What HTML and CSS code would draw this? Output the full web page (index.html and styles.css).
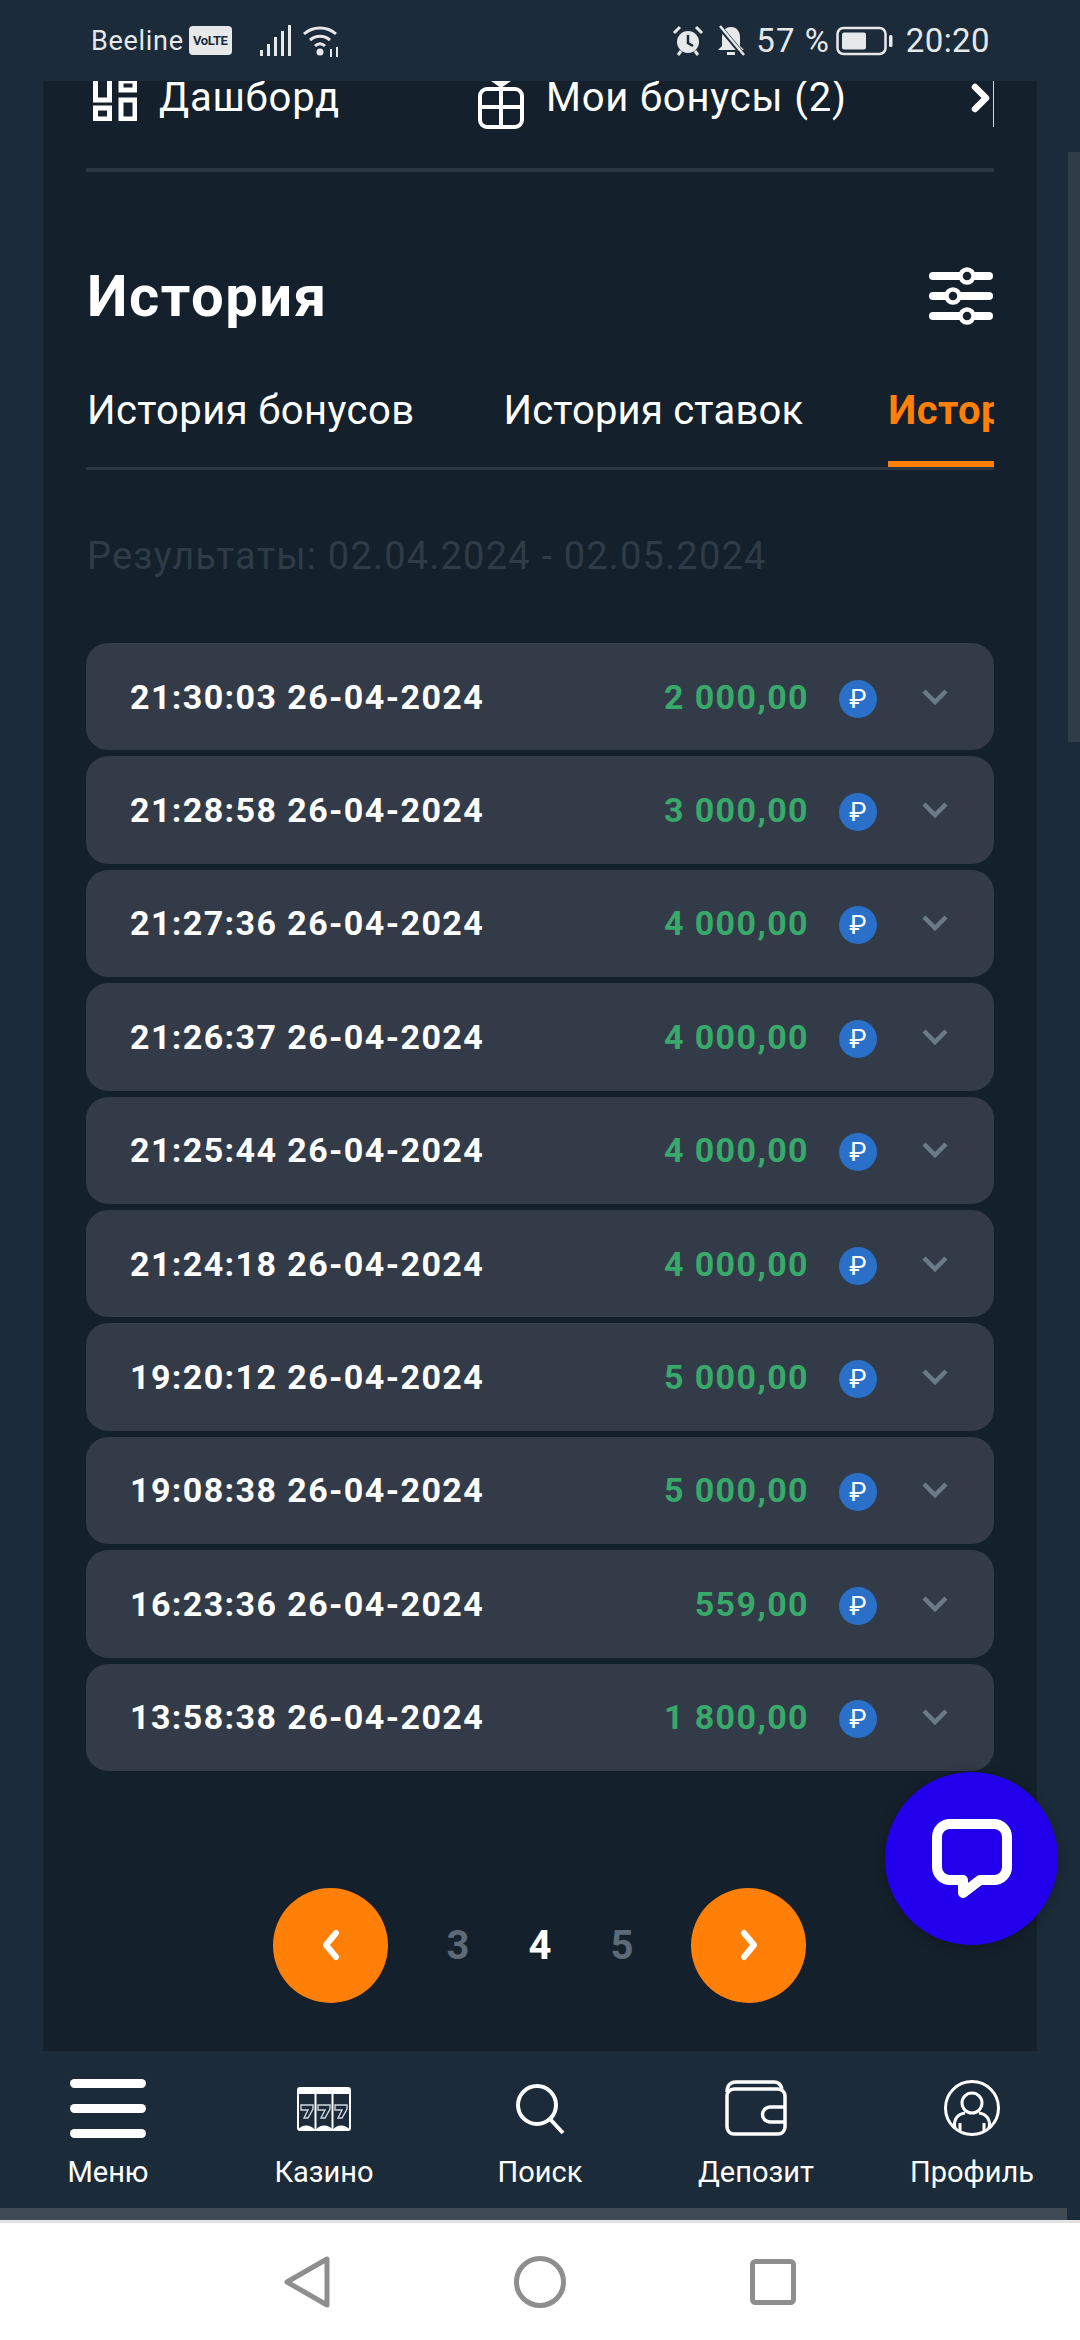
FILE: index.html
```html
<!DOCTYPE html>
<html lang="ru">
<head>
    <meta charset="UTF-8">
    <meta name="viewport" content="width=device-width, initial-scale=1.0">
    <title>История</title>
    <link rel="stylesheet" href="styles.css">
</head>
<body>
    <div class="status-bar">
        <div class="status-left">
            <span class="carrier">Beeline</span>
            <span class="volte">VoLTE</span>
            <svg class="signal" viewBox="0 0 32 32" width="32" height="32"><g fill="#e6e8ea"><rect x="0" y="25" width="3" height="6"/><rect x="7" y="19" width="3" height="12"/><rect x="14" y="12" width="3" height="19"/><rect x="21" y="6" width="3" height="25"/><rect x="28" y="0" width="3" height="31"/></g></svg>
            <svg class="wifi" viewBox="0 0 38 32" width="38" height="32"><g fill="none" stroke="#e6e8ea" stroke-width="3"><path d="M2 9C11 1 25 1 34 9"/><path d="M8 15C14 10 22 10 28 15"/><path d="M13 21C16 18 20 18 23 21"/></g><circle cx="18" cy="27" r="3.5" fill="#e6e8ea"/><path d="M29 24v8M35 22v10" stroke="#e6e8ea" stroke-width="2"/></svg>
        </div>
        <div class="status-right">
            <svg class="alarm" viewBox="0 0 32 32" width="32" height="32"><circle cx="16" cy="17" r="11" fill="#e6e8ea"/><path d="M16 10v8l5 3" fill="none" stroke="#1c2b39" stroke-width="2.5"/><path d="M2 8l6-6M30 8l-6-6M6 30l3-4M26 30l-3-4" stroke="#e6e8ea" stroke-width="3"/></svg>
            <svg class="bell" viewBox="0 0 32 32" width="32" height="32"><path d="M16 2c6 0 9 5 9 10v9l4 4H3l4-4v-9c0-5 3-10 9-10z" fill="#e6e8ea"/><rect x="12" y="27" width="8" height="3" fill="#e6e8ea"/><path d="M4 1l25 30" stroke="#1c2b39" stroke-width="5"/><path d="M5 1l24 29" stroke="#e6e8ea" stroke-width="2.5"/></svg>
            <span class="percent">57 %</span>
            <svg class="battery" viewBox="0 0 58 32" width="58" height="32"><rect x="1.5" y="3" width="48" height="26" rx="6" fill="none" stroke="#e6e8ea" stroke-width="2.5"/><rect x="6" y="7.5" width="24" height="17" rx="2" fill="#e6e8ea"/><rect x="53" y="10" width="3.5" height="12" rx="1.5" fill="#e6e8ea"/></svg>
            <span class="clock">20:20</span>
        </div>
    </div>

    <div class="panel">
        <div class="sub-nav">
            <div class="sub-nav-item dash">
                <svg viewBox="0 0 44 40" width="44" height="40"><g fill="none" stroke="#fff" stroke-width="5"><rect x="2.5" y="-5" width="14" height="24"/><rect x="28" y="0" width="14" height="9"/><rect x="2.5" y="27" width="14" height="11"/><rect x="28" y="19" width="14" height="19"/></g></svg>
                <span>Дашборд</span>
            </div>
            <div class="sub-nav-item gift">
                <svg viewBox="0 0 46 48" width="46" height="48"><g fill="none" stroke="#fff" stroke-width="4"><rect x="2" y="8" width="42" height="38" rx="7"/><path d="M23 8v38M2 26h42"/></g><path d="M13 0l10 7 10-7z" fill="#fff"/></svg>
                <span>Мои бонусы (2)</span>
            </div>
            <div class="sub-nav-end">
                <svg viewBox="0 0 20 30" width="20" height="30"><path d="M4 4l11 11L4 26" fill="none" stroke="#fff" stroke-width="6.500" stroke-linecap="round" stroke-linejoin="round"/></svg>
            </div>
        </div>

        <div class="history-head">
            <h1 class="history-title">История</h1>
            <svg class="filter-icon" viewBox="0 0 64 62" width="64" height="62"><g fill="#fff"><rect x="0" y="7" width="64" height="8" rx="4"/><rect x="0" y="27" width="64" height="8" rx="4"/><rect x="0" y="47" width="64" height="8" rx="4"/></g><g fill="#14202b" stroke="#fff" stroke-width="4.500"><circle cx="38" cy="11" r="6.500"/><circle cx="24" cy="31" r="6.500"/><circle cx="38" cy="51" r="6.500"/></g></svg>
        </div>

        <div class="tabs">
            <span class="tab">История бонусов</span>
            <span class="tab">История ставок</span>
            <span class="tab active">История транзакций</span>
        </div>

        <div class="results">Результаты: 02.04.2024 - 02.05.2024</div>

        <div class="rows">
            <div class="row"><span class="row-date">21:30:03 26-04-2024</span><span class="row-sum">2 000,00</span><span class="rub">₽</span><svg class="chev" viewBox="0 0 28 18" width="28" height="18"><path d="M3 3l11 11L25 3" fill="none" stroke="#6a7a88" stroke-width="4.5"/></svg></div>
            <div class="row"><span class="row-date">21:28:58 26-04-2024</span><span class="row-sum">3 000,00</span><span class="rub">₽</span><svg class="chev" viewBox="0 0 28 18" width="28" height="18"><path d="M3 3l11 11L25 3" fill="none" stroke="#6a7a88" stroke-width="4.5"/></svg></div>
            <div class="row"><span class="row-date">21:27:36 26-04-2024</span><span class="row-sum">4 000,00</span><span class="rub">₽</span><svg class="chev" viewBox="0 0 28 18" width="28" height="18"><path d="M3 3l11 11L25 3" fill="none" stroke="#6a7a88" stroke-width="4.5"/></svg></div>
            <div class="row"><span class="row-date">21:26:37 26-04-2024</span><span class="row-sum">4 000,00</span><span class="rub">₽</span><svg class="chev" viewBox="0 0 28 18" width="28" height="18"><path d="M3 3l11 11L25 3" fill="none" stroke="#6a7a88" stroke-width="4.5"/></svg></div>
            <div class="row"><span class="row-date">21:25:44 26-04-2024</span><span class="row-sum">4 000,00</span><span class="rub">₽</span><svg class="chev" viewBox="0 0 28 18" width="28" height="18"><path d="M3 3l11 11L25 3" fill="none" stroke="#6a7a88" stroke-width="4.5"/></svg></div>
            <div class="row"><span class="row-date">21:24:18 26-04-2024</span><span class="row-sum">4 000,00</span><span class="rub">₽</span><svg class="chev" viewBox="0 0 28 18" width="28" height="18"><path d="M3 3l11 11L25 3" fill="none" stroke="#6a7a88" stroke-width="4.5"/></svg></div>
            <div class="row"><span class="row-date">19:20:12 26-04-2024</span><span class="row-sum">5 000,00</span><span class="rub">₽</span><svg class="chev" viewBox="0 0 28 18" width="28" height="18"><path d="M3 3l11 11L25 3" fill="none" stroke="#6a7a88" stroke-width="4.5"/></svg></div>
            <div class="row"><span class="row-date">19:08:38 26-04-2024</span><span class="row-sum">5 000,00</span><span class="rub">₽</span><svg class="chev" viewBox="0 0 28 18" width="28" height="18"><path d="M3 3l11 11L25 3" fill="none" stroke="#6a7a88" stroke-width="4.5"/></svg></div>
            <div class="row"><span class="row-date">16:23:36 26-04-2024</span><span class="row-sum">559,00</span><span class="rub">₽</span><svg class="chev" viewBox="0 0 28 18" width="28" height="18"><path d="M3 3l11 11L25 3" fill="none" stroke="#6a7a88" stroke-width="4.5"/></svg></div>
            <div class="row"><span class="row-date">13:58:38 26-04-2024</span><span class="row-sum">1 800,00</span><span class="rub">₽</span><svg class="chev" viewBox="0 0 28 18" width="28" height="18"><path d="M3 3l11 11L25 3" fill="none" stroke="#6a7a88" stroke-width="4.5"/></svg></div>
        </div>

        <div class="pager">
            <span class="pager-btn"><svg viewBox="0 0 24 34" width="24" height="34"><path d="M17 5L7 17l10 12" fill="none" stroke="#fff" stroke-width="6" stroke-linecap="round" stroke-linejoin="round"/></svg></span>
            <span class="pager-num">3</span>
            <span class="pager-num current">4</span>
            <span class="pager-num">5</span>
            <span class="pager-btn"><svg viewBox="0 0 24 34" width="24" height="34"><path d="M7 5l10 12L7 29" fill="none" stroke="#fff" stroke-width="6" stroke-linecap="round" stroke-linejoin="round"/></svg></span>
        </div>
    </div>

    <div class="scroll-thumb"></div>

    <div class="chat-btn">
        <svg viewBox="0 0 80 80" width="80" height="80"><path d="M18 5h44a13 13 0 0 1 13 13v30a13 13 0 0 1-13 13H48L31 74V61H18A13 13 0 0 1 5 48V18A13 13 0 0 1 18 5z" fill="none" stroke="#fff" stroke-width="10" stroke-linejoin="round"/></svg>
    </div>

    <nav class="bottom-nav">
        <div class="nav-item">
            <svg viewBox="0 0 76 60" width="76" height="60"><g fill="#fff"><rect x="0" y="0" width="76" height="9" rx="4.5"/><rect x="0" y="25" width="76" height="9" rx="4.5"/><rect x="0" y="50" width="76" height="9" rx="4.5"/></g></svg>
            <span>Меню</span>
        </div>
        <div class="nav-item">
            <svg viewBox="0 0 54 60" width="54" height="60"><g transform="translate(0 8)"><rect x="1" y="1" width="52" height="42" rx="2" fill="none" stroke="#fff" stroke-width="2"/><rect x="1" y="1" width="52" height="6" fill="#fff"/><path d="M18.500 1v42M35.500 1v42" stroke="#fff" stroke-width="2"/><path d="M1 43c3-6 13-6 17 0M19 43c3-6 13-6 17 0M36 43c3-6 13-6 17 0" fill="#fff"/><g fill="none" stroke="#cfd6dc" stroke-width="1.400"><path d="M4 18h12v4l-5 9H7l4-8H4zM21 18h12v4l-5 9h-4l4-8h-7zM38 18h12v4l-5 9h-4l4-8h-7z"/></g></g></svg>
            <span>Казино</span>
        </div>
        <div class="nav-item">
            <svg viewBox="0 0 50 60" width="50" height="60"><g transform="translate(0 5)"><circle cx="22" cy="21" r="19" fill="none" stroke="#fff" stroke-width="4"/><path d="M35 35l13 14" stroke="#fff" stroke-width="4"/></g></svg>
            <span>Поиск</span>
        </div>
        <div class="nav-item">
            <svg viewBox="0 0 62 60" width="62" height="60"><g transform="translate(0 1)" fill="none" stroke="#fff" stroke-width="3.500"><path d="M2 12c0-6 3-10 9-10h38c5 0 7 3 8 7"/><rect x="2" y="9" width="58" height="45" rx="7"/><path d="M60 27H45a7.500 7.500 0 0 0 0 15h15"/></g></svg>
            <span>Депозит</span>
        </div>
        <div class="nav-item">
            <svg viewBox="0 0 56 60" width="56" height="60"><g fill="none" stroke="#fff" stroke-width="3"><circle cx="28" cy="29" r="26.500"/><circle cx="28" cy="24" r="10"/><path d="M11 49c-2-9 3-14 10-15M45 49c2-9-3-14-10-15M16 44v8M40 44v8"/></g></svg>
            <span>Профиль</span>
        </div>
    </nav>
    <div class="nav-strip"></div>

    <div class="sys-nav">
        <svg viewBox="0 0 46 52" width="46" height="52"><path d="M3 26L43 3v46z" fill="none" stroke="#8e8e8e" stroke-width="5" stroke-linejoin="round"/></svg>
        <svg viewBox="0 0 52 52" width="52" height="52"><circle cx="26" cy="26" r="23.500" fill="none" stroke="#8e8e8e" stroke-width="5"/></svg>
        <svg viewBox="0 0 46 46" width="46" height="46"><rect x="2.500" y="2.500" width="41" height="41" rx="3" fill="none" stroke="#8e8e8e" stroke-width="5"/></svg>
    </div>
</body>
</html>
```

FILE: styles.css
```css
* {
    margin: 0;
    padding: 0;
    box-sizing: border-box;
}

body {
    font-family: 'Roboto', 'Noto Sans', sans-serif;
    background: #1c2b39;
    color: white;
    width: 1080px;
    height: 2340px;
    display: flex;
    flex-direction: column;
    position: relative;
    overflow: hidden;
}

svg {
    display: block;
    flex-shrink: 0;
}

/* status bar */
.status-bar {
    height: 81px;
    padding: 0 90px 0 91px;
    display: flex;
    align-items: center;
    justify-content: space-between;
    color: #e6e8ea;
    font-size: 33px;
}

.status-left, .status-right {
    display: flex;
    align-items: center;
}

.carrier {
    font-size: 27px;
    letter-spacing: 0.7px;
}

.volte {
    background: #e6e8ea;
    color: #1c2b39;
    width: 43px;
    height: 29px;
    display: flex;
    align-items: center;
    justify-content: center;
    font-size: 13px;
    font-weight: bold;
    letter-spacing: -0.4px;
    border-radius: 4px;
    margin-left: 5px;
    margin-right: 28px;
}

.wifi {
    margin-left: 10px;
}

.bell {
    margin-left: 11px;
}

.percent {
    margin-left: 9px;
    margin-right: 6px;
    letter-spacing: 1px;
}

.clock {
    margin-left: 12px;
    letter-spacing: 0.4px;
}

/* main panel */
.panel {
    height: 1970px;
    margin: 0 43px;
    background: #14202b;
    padding: 0 43px;
    overflow: hidden;
}

.sub-nav {
    height: 91px;
    border-bottom: 4px solid #2a3641;
    display: flex;
    align-items: flex-start;
    position: relative;
}

.sub-nav-item {
    display: flex;
    font-size: 40px;
    line-height: 34px;
    letter-spacing: 0.8px;
    gap: 22px;
}

.dash {
    width: 385px;
    margin-left: 7px;
}

.sub-nav-end {
    position: absolute;
    right: 0;
    top: 0;
    height: 46px;
    padding: 2px 2px 0 0;
    border-right: 1px solid #cfd6dc;
}

.history-head {
    display: flex;
    justify-content: space-between;
    align-items: center;
    margin-top: 93px;
    height: 62px;
}

.history-title {
    font-size: 58px;
    font-weight: bold;
    line-height: 62px;
    letter-spacing: 1.5px;
    margin-left: 1px;
}

.filter-icon {
    margin-right: 1px;
}

.tabs {
    height: 90px;
    margin-top: 53px;
    padding-top: 8px;
    border-bottom: 3px solid #2a3641;
    display: flex;
    gap: 88px;
    white-space: nowrap;
    overflow: hidden;
    font-size: 40px;
    line-height: 46px;
    letter-spacing: 0.4px;
}

.tab {
    padding-left: 1px;
    position: relative;
    height: 82px;
}

.tab:nth-child(2) {
    letter-spacing: 0.2px;
}

.tab.active {
    color: #ff7f07;
    font-weight: bold;
    padding-left: 0;
    margin-left: -3px;
    border-bottom: 9px solid #ff7f07;
    border-top-left-radius: 8px;
}

.results {
    color: #2f3b47;
    font-size: 38px;
    line-height: 44px;
    letter-spacing: 1.2px;
    margin-top: 64px;
    padding-left: 1px;
}

.rows {
    margin-top: 65px;
    display: flex;
    flex-direction: column;
    gap: 6px;
}

.row {
    height: 107.4px;
    background: #323b47;
    border-radius: 22px;
    display: flex;
    align-items: center;
    padding: 0 45px 0 44px;
    font-size: 34px;
    font-weight: bold;
    letter-spacing: 1.4px;
}

.row-date {
    flex: 1;
}

.row-sum {
    color: #38a96b;
}

.rub {
    width: 38px;
    height: 38px;
    border-radius: 50%;
    background: #2a70c8;
    font-size: 26px;
    font-weight: normal;
    letter-spacing: 0;
    display: flex;
    align-items: center;
    justify-content: center;
    margin-left: 30px;
    margin-top: 4px;
}

.chev {
    margin-left: 44px;
    margin-top: 0;
}

.pager {
    display: flex;
    align-items: center;
    margin-top: 117px;
    padding-left: 187px;
    font-size: 40px;
    font-weight: bold;
}

.pager-btn {
    width: 115px;
    height: 115px;
    border-radius: 50%;
    background: #ff7f07;
    display: flex;
    align-items: center;
    justify-content: center;
}

.pager-num {
    width: 82px;
    text-align: center;
    color: #5d6b78;
}

.pager-num:nth-child(2) {
    margin-left: 29px;
}

.pager-num:nth-child(4) {
    margin-right: 28px;
}

.pager-num.current {
    color: white;
}

/* things over the page */
.scroll-thumb {
    position: absolute;
    right: 0;
    top: 152px;
    width: 12px;
    height: 590px;
    background: #2f3d49;
}

.chat-btn {
    position: absolute;
    left: 885px;
    top: 1772px;
    width: 173px;
    height: 173px;
    border-radius: 50%;
    background: #2200ee;
    box-shadow: 0 2px 12px rgba(0,0,0,0.25);
    display: flex;
    align-items: center;
    justify-content: center;
}

/* bottom nav */
.bottom-nav {
    height: 157px;
    display: grid;
    grid-template-columns: repeat(5, 1fr);
    background: #1c2b39;
}

.nav-item {
    display: flex;
    flex-direction: column;
    align-items: center;
    position: relative;
    padding-top: 28px;
    font-size: 29px;
}

.nav-item span {
    position: absolute;
    top: 104px;
}

.nav-strip {
    height: 12px;
    margin-right: 13px;
    background: #3f4a54;
}

.sys-nav {
    flex: 1;
    background: white;
    border-top: 3px solid #e2e2e2;
    display: flex;
    align-items: center;
    justify-content: center;
    gap: 184px;
}
```
